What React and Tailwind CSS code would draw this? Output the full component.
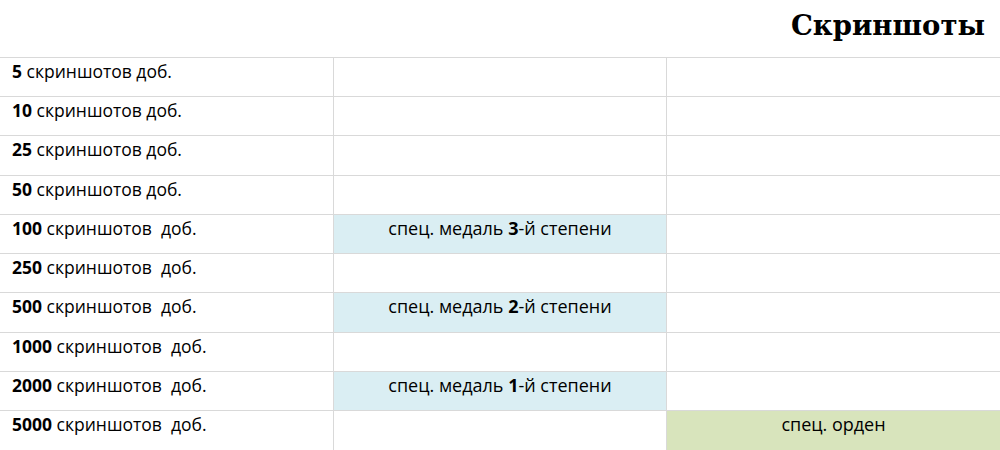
export default function App() {
  const rows = [
    { n: "5", t: " скриншотов доб.", h: "h-[39px]", mid: null, right: null },
    { n: "10", t: " скриншотов доб.", h: "h-[39px]", mid: null, right: null },
    { n: "25", t: " скриншотов доб.", h: "h-[40px]", mid: null, right: null },
    { n: "50", t: " скриншотов доб.", h: "h-[39px]", mid: null, right: null },
    { n: "100", t: " скриншотов  доб.", h: "h-[39px]", mid: "3", right: null },
    { n: "250", t: " скриншотов  доб.", h: "h-[39px]", mid: null, right: null },
    { n: "500", t: " скриншотов  доб.", h: "h-[40px]", mid: "2", right: null },
    { n: "1000", t: " скриншотов  доб.", h: "h-[39px]", mid: null, right: null },
    { n: "2000", t: " скриншотов  доб.", h: "h-[39px]", mid: "1", right: null },
    { n: "5000", t: " скриншотов  доб.", h: "h-[40px]", mid: null, right: "спец. орден" },
  ];
  return (
    <div className="w-[1000px] h-[450px] overflow-hidden bg-white text-black font-['Open_Sans',sans-serif]">
      <div className="h-[57px] flex items-start justify-end pr-[15px] pt-[7px]">
        <span className="font-['DejaVu_Serif',serif] font-bold text-[27.5px] leading-[36px]">Скриншоты</span>
      </div>
      <div className="grid grid-cols-[334px_333px_333px] border-t border-[#d9d9d9]">
        {rows.map((r, i) => (
          <div key={i} className="contents">
            <div className={`${r.h} border-b border-r border-[#d9d9d9] pl-[12px] pt-[1px] text-[17.5px] leading-[24px] whitespace-pre`}>
              <span className="font-bold">{r.n}</span>
              {r.t}
            </div>
            <div
              className={`${r.h} border-b border-r border-[#d9d9d9] pt-[1px] text-[18px] leading-[24px] text-center ${r.mid ? "bg-[#daeef3]" : ""}`}
            >
              {r.mid ? (
                <>
                  спец. медаль <span className="font-bold">{r.mid}</span>-й степени
                </>
              ) : null}
            </div>
            <div
              className={`${r.h} border-b border-[#d9d9d9] pt-[1px] text-[18px] leading-[24px] text-center ${r.right ? "bg-[#d8e4bc]" : ""}`}
            >
              {r.right}
            </div>
          </div>
        ))}
      </div>
    </div>
  );
}
